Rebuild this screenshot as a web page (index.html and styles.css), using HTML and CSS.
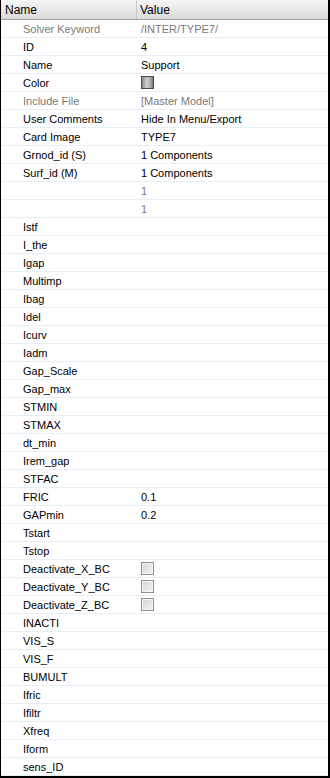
FILE: index.html
```html
<!DOCTYPE html>
<html lang="en">
<head>
    <meta charset="UTF-8">
    <meta name="viewport" content="width=device-width, initial-scale=1.0">
    <title>Entity Editor</title>
    <link rel="stylesheet" href="styles.css">
</head>
<body>
    <div id="editor">
        <div class="header">
            <div class="hcell name">Name</div>
            <div class="hcell value">Value</div>
        </div>

        <div class="row dim"><span class="key">Solver Keyword</span><span class="val">/INTER/TYPE7/</span></div>
        <div class="row"><span class="key">ID</span><span class="val">4</span></div>
        <div class="row"><span class="key">Name</span><span class="val">Support</span></div>
        <div class="row"><span class="key">Color</span><span class="val"><span class="swatch"></span></span></div>
        <div class="row dim"><span class="key">Include File</span><span class="val">[Master Model]</span></div>
        <div class="row"><span class="key">User Comments</span><span class="val">Hide In Menu/Export</span></div>
        <div class="row"><span class="key">Card Image</span><span class="val">TYPE7</span></div>
        <div class="row"><span class="key">Grnod_id (S)</span><span class="val">1 Components</span></div>
        <div class="row"><span class="key">Surf_id (M)</span><span class="val">1 Components</span></div>
        <div class="row dim"><span class="key"></span><span class="val">1</span></div>
        <div class="row dim"><span class="key"></span><span class="val">1</span></div>
        <div class="row"><span class="key">Istf</span><span class="val"></span></div>
        <div class="row"><span class="key">I_the</span><span class="val"></span></div>
        <div class="row"><span class="key">Igap</span><span class="val"></span></div>
        <div class="row"><span class="key">Multimp</span><span class="val"></span></div>
        <div class="row"><span class="key">Ibag</span><span class="val"></span></div>
        <div class="row"><span class="key">Idel</span><span class="val"></span></div>
        <div class="row"><span class="key">Icurv</span><span class="val"></span></div>
        <div class="row"><span class="key">Iadm</span><span class="val"></span></div>
        <div class="row"><span class="key">Gap_Scale</span><span class="val"></span></div>
        <div class="row"><span class="key">Gap_max</span><span class="val"></span></div>
        <div class="row"><span class="key">STMIN</span><span class="val"></span></div>
        <div class="row"><span class="key">STMAX</span><span class="val"></span></div>
        <div class="row"><span class="key">dt_min</span><span class="val"></span></div>
        <div class="row"><span class="key">Irem_gap</span><span class="val"></span></div>
        <div class="row"><span class="key">STFAC</span><span class="val"></span></div>
        <div class="row"><span class="key">FRIC</span><span class="val">0.1</span></div>
        <div class="row"><span class="key">GAPmin</span><span class="val">0.2</span></div>
        <div class="row"><span class="key">Tstart</span><span class="val"></span></div>
        <div class="row"><span class="key">Tstop</span><span class="val"></span></div>
        <div class="row"><span class="key">Deactivate_X_BC</span><span class="val"><span class="check"></span></span></div>
        <div class="row"><span class="key">Deactivate_Y_BC</span><span class="val"><span class="check"></span></span></div>
        <div class="row"><span class="key">Deactivate_Z_BC</span><span class="val"><span class="check"></span></span></div>
        <div class="row"><span class="key">INACTI</span><span class="val"></span></div>
        <div class="row"><span class="key">VIS_S</span><span class="val"></span></div>
        <div class="row"><span class="key">VIS_F</span><span class="val"></span></div>
        <div class="row"><span class="key">BUMULT</span><span class="val"></span></div>
        <div class="row"><span class="key">Ifric</span><span class="val"></span></div>
        <div class="row"><span class="key">Ifiltr</span><span class="val"></span></div>
        <div class="row"><span class="key">Xfreq</span><span class="val"></span></div>
        <div class="row"><span class="key">Iform</span><span class="val"></span></div>
        <div class="row"><span class="key">sens_ID</span><span class="val"></span></div>
    </div>
</body>
</html>
```

FILE: styles.css
```css
body {
    margin: 0;
    font-family: "Liberation Sans", Arial, sans-serif;
    font-size: 11px;
    color: #000;
    background-color: #fff;
}

#editor {
    width: 330px;
    height: 778px;
    box-sizing: border-box;
    border-left: 1px solid #000;
    border-right: 2px solid #000;
    border-bottom: 2px solid #000;
    overflow: hidden;
    display: flex;
    flex-direction: column;
}

.header {
    display: grid;
    grid-template-columns: 136px 1fr;
    height: 20px;
    box-sizing: border-box;
    border-bottom: 1px solid #a0a0a0;
    background: linear-gradient(#f7f7f7, #e6e6e6 55%, #dcdcdc);
}

.hcell {
    display: flex;
    align-items: center;
    font-size: 12px;
    padding-left: 4px;
}

.hcell.name {
    border-right: 1px solid #c8c8c8;
}

.hcell.value {
    padding-left: 3px;
}

.row {
    display: grid;
    grid-template-columns: 136px 1fr;
    height: 18px;
    box-sizing: border-box;
    border-bottom: 1px solid #e4f0f6;
    align-items: center;
}

.key {
    padding-left: 22px;
    white-space: nowrap;
}

.val {
    padding-left: 4px;
    display: flex;
    align-items: center;
    white-space: nowrap;
}

.row.dim {
    color: #7a7a7a;
}

.swatch {
    width: 13px;
    height: 13px;
    box-sizing: border-box;
    border: 1px solid #4a4a4a;
    background: linear-gradient(90deg, #8a8a8a, #d0d0d0 45%, #b4b4b4 70%, #7a7a7a);
}

.check {
    width: 13px;
    height: 13px;
    box-sizing: border-box;
    border: 1px solid #8e8f8f;
    background: linear-gradient(135deg, #d4d4d4, #f4f4f4);
    box-shadow: inset 0 0 0 1px #f4f4f4;
}
```
